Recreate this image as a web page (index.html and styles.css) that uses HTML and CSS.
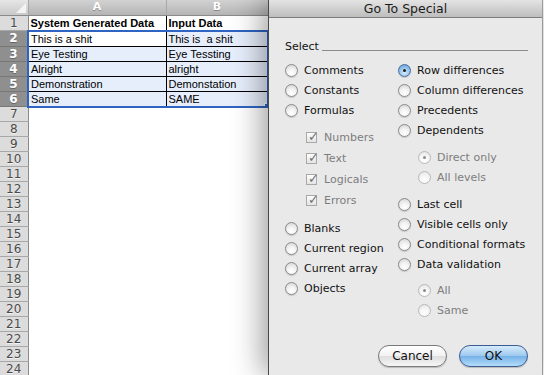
FILE: index.html
```html
<!DOCTYPE html>
<html lang="en">
<head>
    <meta charset="UTF-8">
    <title>Go To Special</title>
    <link rel="stylesheet" href="styles.css">
</head>
<body>
    <!-- Planilha -->
    <div class="sheet">
        <table class="grid">
            <colgroup>
                <col class="c-head">
                <col class="c-a">
                <col class="c-b">
            </colgroup>
            <tr class="col-head">
                <th class="corner"><span class="tri"></span></th>
                <th class="sel">A</th>
                <th class="sel">B</th>
            </tr>
            <tr class="data">
                <th>1</th><td class="b">System Generated Data</td><td class="b">Input Data</td>
            </tr>
            <tr class="data selrow first">
                <th>2</th><td class="active">This is a shit</td><td>This is&nbsp; a shit</td>
            </tr>
            <tr class="data selrow">
                <th>3</th><td>Eye Testing</td><td>Eye Tessting</td>
            </tr>
            <tr class="data selrow">
                <th>4</th><td>Alright</td><td>alright</td>
            </tr>
            <tr class="data selrow">
                <th>5</th><td>Demonstration</td><td>Demonstation</td>
            </tr>
            <tr class="data selrow last">
                <th>6</th><td>Same</td><td class="handle-cell">SAME<span class="handle"></span></td>
            </tr>
            <tr><th>7</th><td></td><td></td></tr>
            <tr><th>8</th><td></td><td></td></tr>
            <tr><th>9</th><td></td><td></td></tr>
            <tr><th>10</th><td></td><td></td></tr>
            <tr><th>11</th><td></td><td></td></tr>
            <tr><th>12</th><td></td><td></td></tr>
            <tr><th>13</th><td></td><td></td></tr>
            <tr><th>14</th><td></td><td></td></tr>
            <tr><th>15</th><td></td><td></td></tr>
            <tr><th>16</th><td></td><td></td></tr>
            <tr><th>17</th><td></td><td></td></tr>
            <tr><th>18</th><td></td><td></td></tr>
            <tr><th>19</th><td></td><td></td></tr>
            <tr><th>20</th><td></td><td></td></tr>
            <tr><th>21</th><td></td><td></td></tr>
            <tr><th>22</th><td></td><td></td></tr>
            <tr><th>23</th><td></td><td></td></tr>
            <tr><th>24</th><td></td><td></td></tr>
        </table>
    </div>

    <!-- Janela Go To Special -->
    <div class="dialog">
        <div class="titlebar">Go To Special</div>
        <div class="dialog-body">
            <div class="group-title"><span>Select</span><span class="rule"></span></div>

            <div class="options">
                <div class="col">
                    <div class="opt"><span class="radio"></span>Comments</div>
                    <div class="opt"><span class="radio"></span>Constants</div>
                    <div class="opt"><span class="radio"></span>Formulas</div>
                    <div class="sub checks">
                        <div class="opt dim"><span class="check">&#10003;</span>Numbers</div>
                        <div class="opt dim"><span class="check">&#10003;</span>Text</div>
                        <div class="opt dim"><span class="check">&#10003;</span>Logicals</div>
                        <div class="opt dim"><span class="check">&#10003;</span>Errors</div>
                    </div>
                    <div class="opt"><span class="radio"></span>Blanks</div>
                    <div class="opt"><span class="radio"></span>Current region</div>
                    <div class="opt"><span class="radio"></span>Current array</div>
                    <div class="opt"><span class="radio"></span>Objects</div>
                </div>
                <div class="col">
                    <div class="opt"><span class="radio on"></span>Row differences</div>
                    <div class="opt"><span class="radio"></span>Column differences</div>
                    <div class="opt"><span class="radio"></span>Precedents</div>
                    <div class="opt"><span class="radio"></span>Dependents</div>
                    <div class="sub">
                        <div class="opt dim"><span class="radio dot"></span>Direct only</div>
                        <div class="opt dim"><span class="radio"></span>All levels</div>
                    </div>
                    <div class="opt"><span class="radio"></span>Last cell</div>
                    <div class="opt"><span class="radio"></span>Visible cells only</div>
                    <div class="opt"><span class="radio"></span>Conditional formats</div>
                    <div class="opt"><span class="radio"></span>Data validation</div>
                    <div class="sub last-sub">
                        <div class="opt dim"><span class="radio dot"></span>All</div>
                        <div class="opt dim tall"><span class="radio"></span>Same</div>
                    </div>
                </div>
            </div>

            <div class="buttons">
                <button class="btn">Cancel</button>
                <button class="btn ok">OK</button>
            </div>
        </div>
    </div>
</body>
</html>
```

FILE: styles.css
```css
/* Base */
html, body {
    margin: 0;
    padding: 0;
    width: 544px;
    height: 375px;
    overflow: hidden;
    background: #fff;
}

body {
    display: flex;
    font-family: "DejaVu Sans", sans-serif;
}

/* Planilha */
.sheet {
    width: 268px;
    flex: none;
    overflow: hidden;
    background: #fff;
}

.grid {
    border-collapse: collapse;
    table-layout: fixed;
    width: 268px;
    font-family: "Liberation Sans", Arial, sans-serif;
    font-size: 11px;
    color: #000;
}

.c-head { width: 28px; }
.c-a { width: 138px; }
.c-b { width: 102px; }

.grid tr {
    height: 15px;
}

.grid th {
    padding: 0;
    font-family: "DejaVu Sans", sans-serif;
    font-weight: normal;
    font-size: 12px;
    color: #4a4a4a;
    background: #dcdcdc;
    border-right: 1px solid #8a8a8a;
    border-bottom: 1px solid #a8a8a8;
    text-align: center;
    line-height: 14px;
    text-shadow: 0 1px 0 #f2f2f2;
}

.grid td {
    padding: 0 0 0 2px;
    height: 14px;
    line-height: 14px;
    white-space: nowrap;
    overflow: hidden;
}

.col-head th {
    font-size: 11px;
    background: linear-gradient(#e6e6e6, #c9c9c9);
    border-bottom: 1px solid #8a8a8a;
    border-right: 1px solid #a8a8a8;
}

.col-head th.sel {
    color: #fff;
    font-weight: bold;
    background: linear-gradient(#d2d2d2, #b4b4b4);
    text-shadow: 0 1px 0 #888;
}

.corner {
    position: relative;
}

.corner .tri {
    position: absolute;
    right: 2px;
    bottom: 2px;
    width: 0;
    height: 0;
    border-left: 10px solid transparent;
    border-bottom: 10px solid #f4f4f4;
}

.data td {
    border: 1px solid #000;
}

.data td.b {
    font-weight: bold;
}

.selrow th {
    background: #8f8f8f;
    color: #fff;
    font-weight: bold;
    border-bottom-color: #777;
    text-shadow: 0 1px 0 #666;
}

.selrow td {
    background: #e6eefb;
}

.selrow td.active {
    background: #fff;
}

.selrow td:nth-child(2) { border-left: 2px solid #2f64c2; }
.selrow td:nth-child(3) { border-right: 2px solid #2f64c2; }
.selrow.first td { border-top: 2px solid #2f64c2; }
.selrow.last td { border-bottom: 2px solid #2f64c2; }

.handle-cell {
    position: relative;
}

.handle {
    position: absolute;
    right: -3px;
    bottom: -3px;
    width: 4px;
    height: 4px;
    background: #2f64c2;
    border: 1px solid #fff;
}

/* Janela */
.dialog {
    position: relative;
    z-index: 2;
    width: 273px;
    flex: none;
    height: 375px;
    background: #e9e9e9;
    border-left: 1px solid #4a4a4a;
    border-right: 1px solid #9a9a9a;
    box-shadow: -6px 0 28px rgba(0, 0, 0, 0.38);
    font-size: 11px;
    color: #111;
}

.titlebar {
    height: 17px;
    line-height: 17px;
    text-align: center;
    font-size: 12.5px;
    color: #1a1a1a;
    background: linear-gradient(#e4e4e4, #bdbdbd);
    border-bottom: 1px solid #7c7c7c;
}

.dialog-body {
    padding: 21px 14px 0 16px;
}

.group-title {
    display: flex;
    align-items: flex-end;
    height: 14px;
}

.group-title .rule {
    flex: 1;
    border-bottom: 1px solid #8c8c8c;
    margin: 0 0 2px 3px;
}

.options {
    display: grid;
    grid-template-columns: 113px 1fr;
    margin-top: 7px;
}

.opt {
    display: flex;
    align-items: center;
    height: 20px;
    white-space: nowrap;
}

.opt.dim {
    color: #7d7d7d;
}

.sub {
    margin: 7px 0 7px 20px;
}

.sub.checks {
    margin-left: 21px;
}

.sub.checks .opt {
    height: 21px;
}

.last-sub {
    margin-top: 6px;
}

.opt.tall {
    height: 21px;
}

/* Botões de rádio */
.radio {
    flex: none;
    box-sizing: border-box;
    width: 13px;
    height: 13px;
    margin-right: 6px;
    border-radius: 50%;
    border: 1px solid #8a8a8a;
    background: radial-gradient(circle at 50% 75%, #fff 0, #f4f4f4 40%, #cfcfcf 100%);
    box-shadow: 0 1px 1px rgba(0, 0, 0, 0.15);
    position: relative;
}

.radio.on {
    border-color: #4a6c9c;
    background: radial-gradient(circle at 50% 70%, #d8ecfb 0, #8ec0ec 55%, #5a93d2 100%);
}

.radio.on::after,
.radio.dot::after {
    content: "";
    position: absolute;
    left: 4px;
    top: 4px;
    width: 3px;
    height: 3px;
    border-radius: 50%;
    background: #1d1d1d;
}

.dim .radio {
    border-color: #b8b8b8;
    background: radial-gradient(circle at 50% 75%, #fff 0, #f6f6f6 45%, #e0e0e0 100%);
    box-shadow: none;
}

.radio.dot::after {
    background: #8a8a8a;
}

/* Caixas de seleção */
.check {
    flex: none;
    box-sizing: border-box;
    width: 11px;
    height: 11px;
    margin-right: 7px;
    border: 1px solid #a8a8a8;
    background: linear-gradient(#fdfdfd, #e4e4e4);
    color: #6f6f6f;
    font-size: 13px;
    line-height: 8px;
    text-indent: 1px;
    overflow: visible;
    font-weight: bold;
}

/* Botões */
.buttons {
    display: flex;
    justify-content: flex-end;
    gap: 12px;
    margin-top: 17px;
}

.btn {
    width: 69px;
    height: 22px;
    padding: 0;
    border-radius: 11px;
    border: 1px solid #7a7a7a;
    background: linear-gradient(#ffffff 0, #f2f2f2 50%, #dedede 51%, #f6f6f6 100%);
    font-family: "DejaVu Sans", sans-serif;
    font-size: 12px;
    color: #111;
    box-shadow: 0 1px 1px rgba(0, 0, 0, 0.2);
}

.btn.ok {
    border-color: #3a5c93;
    background: linear-gradient(#d6ebfb 0, #9cc8ef 50%, #76b1e8 51%, #b3dcfb 100%);
}
```
